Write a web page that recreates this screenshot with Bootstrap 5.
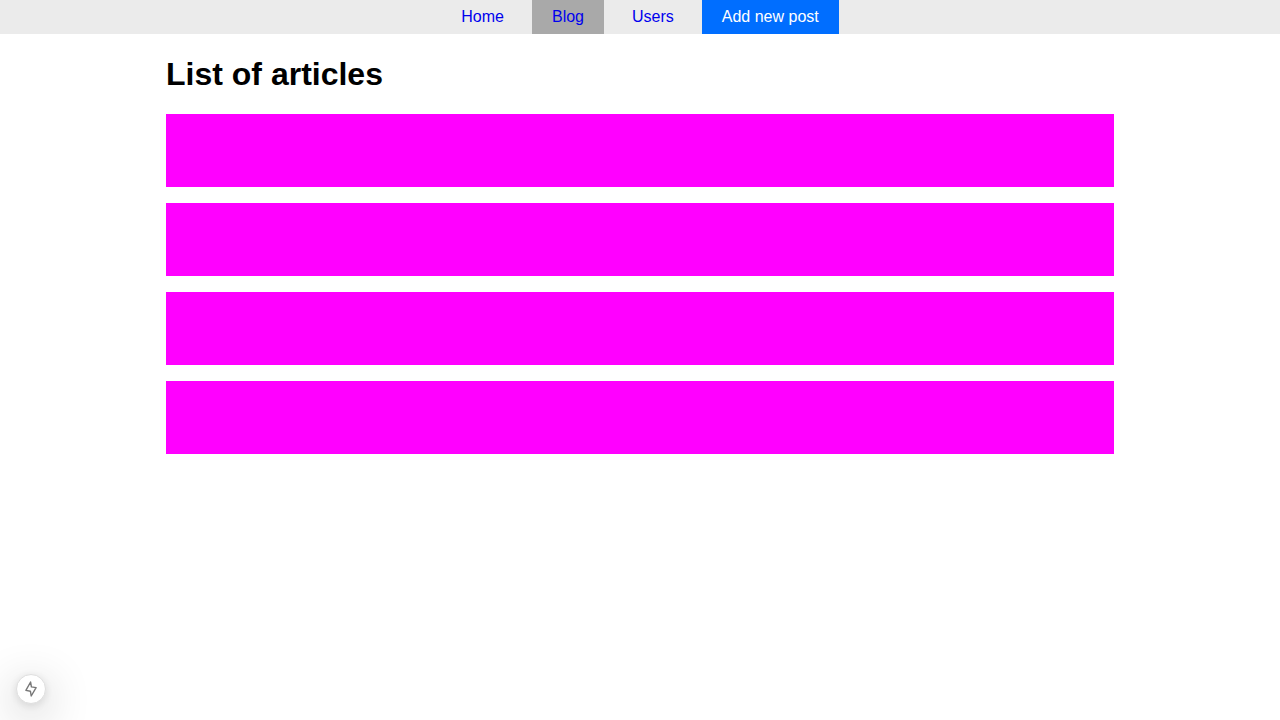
<!DOCTYPE html>
<html lang="en">
<head>
<meta charset="utf-8">
<meta name="viewport" content="width=device-width, initial-scale=1">
<title>Blog</title>
<link href="https://cdn.jsdelivr.net/npm/bootstrap@5.3.0/dist/css/bootstrap.min.css" rel="stylesheet">
<style>
body { font-family: "Liberation Sans", Arial, sans-serif; color: #000; line-height: 18px; }
.site-nav { background: #ebebeb; }
.site-nav a { color: #00e; padding: 8px 20px; text-decoration: none; }
.site-nav a.current { background: #a9a9a9; }
.site-nav a.action { background: #006eff; color: #fff; }
.page { max-width: 980px; padding: 0 16px; }
.page h1 { font-size: 32px; font-weight: 700; line-height: 36px; margin: 22px 0; }
.article-slot { background: #f0f; height: 73px; }
.dev-badge { left: 16px; bottom: 16px; width: 30px; height: 30px; background: #fff; border: 1px solid #dedede; box-shadow: 0 11px 46px 0 rgba(0,0,0,.3), 0 2px 10px 0 rgba(0,0,0,.12); }
</style>
</head>
<body>
<nav class="site-nav d-flex justify-content-center gap-2">
<a href="#">Home</a>
<a href="#" class="current" aria-current="page">Blog</a>
<a href="#">Users</a>
<a href="#" class="action">Add new post</a>
</nav>
<main class="page mx-auto">
<h1>List of articles</h1>
<div class="d-flex flex-column gap-3">
<article class="article-slot"></article>
<article class="article-slot"></article>
<article class="article-slot"></article>
<article class="article-slot"></article>
</div>
</main>
<button type="button" class="dev-badge position-fixed rounded-circle p-0 d-flex align-items-center justify-content-center" aria-label="Static route">
<svg width="16" height="16" viewBox="0 0 16 16" fill="none" stroke="#777" stroke-width="1.4" stroke-linejoin="round" aria-hidden="true"><path d="M7.6 1L2.9 9.4L7.4 10.2L8.2 15L13.1 6.6L8.4 5.9Z"/></svg>
</button>
<script src="https://cdn.jsdelivr.net/npm/bootstrap@5.3.0/dist/js/bootstrap.bundle.min.js"></script>
</body>
</html>
